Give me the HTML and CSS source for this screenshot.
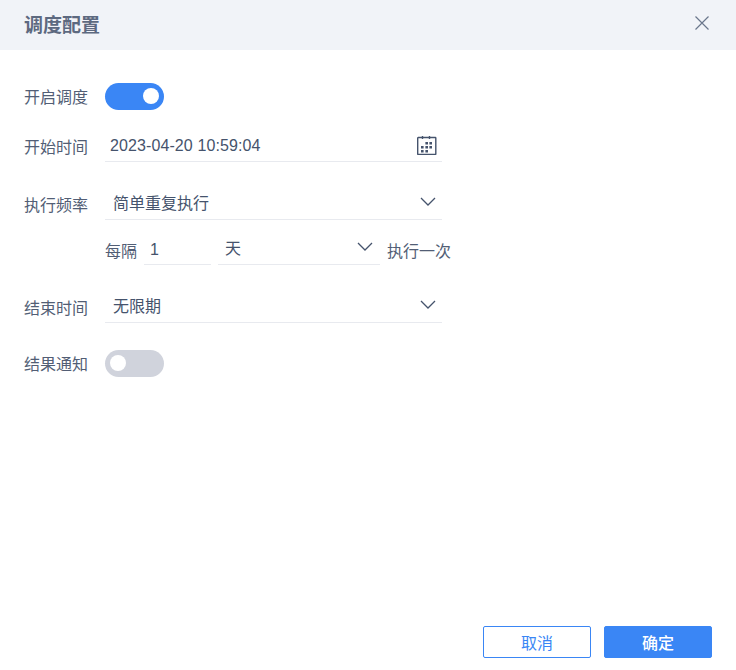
FILE: index.html
```html
<!DOCTYPE html>
<html lang="zh-CN">
<head>
<meta charset="utf-8">
<title>调度配置</title>
<link rel="stylesheet" href="styles.css">
</head>
<body>
<div class="dialog">
  <header class="head">
    <h1 class="title">调度配置</h1>
    <svg class="close" width="16" height="16" viewBox="0 0 16 16"><path d="M1.500 1.500l13 13M14.500 1.500l-13 13"/></svg>
  </header>
  <main class="form">
    <div class="row row-switch-a">
      <span class="label">开启调度</span>
      <span class="switch on"><span class="knob"></span></span>
    </div>
    <div class="row row-start">
      <span class="label">开始时间</span>
      <div class="field date">
        <span class="date-text">2023-04-20 10:59:04</span>
        <svg class="cal" width="20" height="20" viewBox="0 0 20 20">
          <path class="cal-line" d="M1.200 2.500h17.100a.5.5 0 0 1 .5.5v16a.5.5 0 0 1-.5.5H1.200a.5.5 0 0 1-.5-.5V3a.5.5 0 0 1 .5-.5zM5.500 1v3M12.500 1v3"/>
          <path class="cal-dot" d="M8.400 7H11v2.500H8.400zM12.400 7H15v2.500h-2.600zM4 11h2.600v2.500H4zM8.400 11H11v2.500H8.400zM12.400 11H15v2.500h-2.600zM4 15h2.600v2.500H4zM8.400 15H11v2.500H8.400z"/>
        </svg>
      </div>
    </div>
    <div class="row row-freq">
      <span class="label">执行频率</span>
      <div class="field select">
        <span class="value">简单重复执行</span>
        <svg class="chev" width="16" height="9" viewBox="0 0 16 9"><path d="M1 1l7 7 7-7"/></svg>
      </div>
    </div>
    <div class="interval">
      <span class="text">每隔</span>
      <div class="num">1</div>
      <div class="unit">
        <span class="value">天</span>
        <svg class="chev" width="16" height="9" viewBox="0 0 16 9"><path d="M1 1l7 7 7-7"/></svg>
      </div>
      <span class="text">执行一次</span>
    </div>
    <div class="row row-end">
      <span class="label">结束时间</span>
      <div class="field select">
        <span class="value">无限期</span>
        <svg class="chev" width="16" height="9" viewBox="0 0 16 9"><path d="M1 1l7 7 7-7"/></svg>
      </div>
    </div>
    <div class="row row-notify">
      <span class="label">结果通知</span>
      <span class="switch off"><span class="knob"></span></span>
    </div>
  </main>
  <footer class="foot">
    <button class="btn ghost" type="button">取消</button>
    <button class="btn primary" type="button">确定</button>
  </footer>
</div>
</body>
</html>
```
FILE: styles.css
```css
* { box-sizing: border-box; }
html, body { margin: 0; height: 100%; }
body {
  background: #fff;
  color: #45536c;
  font-family: "Liberation Sans", "Noto Sans CJK SC", sans-serif;
  font-size: 16px;
}
.dialog { width: 736px; height: 670px; display: flex; flex-direction: column; }
.head {
  height: 50px;
  flex: none;
  background: #f1f3f8;
  display: flex;
  align-items: center;
  justify-content: space-between;
  padding: 0 26px 0 24px;
}
.title { margin: -4px 0 0; font-size: 19px; font-weight: 700; color: #5d6980; }
.close { margin-top: -5px; }
.close path { stroke: #6b768c; stroke-width: 1.2; fill: none; }
.form { flex: 1; padding: 33px 0 0 24px; }
.row { display: flex; align-items: center; }
.label { width: 81px; flex: none; color: #525e75; line-height: 24px; padding-top: 3px; }
.switch {
  width: 59px;
  height: 27px;
  border-radius: 14px;
  display: flex;
  align-items: center;
  padding: 0 5px;
}
.switch.on { background: #3a86f5; justify-content: flex-end; }
.switch.off { background: #d0d3dc; }
.knob { width: 16px; height: 16px; border-radius: 50%; background: #fff; margin-top: -1px; }
.row-switch-a { height: 27px; }
.row-start { margin-top: 20px; height: 32px; }
.row-freq { margin-top: 26px; height: 32px; }
.row-end { margin-top: 26px; height: 32px; }
.row-notify { margin-top: 27px; height: 27px; }
.field {
  width: 337px;
  height: 32px;
  border-bottom: 1px solid #e8eaef;
  display: flex;
  align-items: center;
  justify-content: space-between;
  color: #45536c;
  font-size: 16px;
}
.date { padding: 0 0 0 5px; }
.date-text { letter-spacing: 0.1px; }
.cal { margin: -1px 5px 0 0; }
.cal-line { fill: none; stroke: #45536c; stroke-width: 1.4; }
.cal-dot { fill: #45536c; }
.select { padding: 0 6px 1px 8px; }
.value { margin-top: -2px; }
.chev { flex: none; margin-top: -3px; }
.chev path { fill: none; stroke: #45536c; stroke-width: 1.3; }
.interval {
  display: flex;
  align-items: center;
  margin: 13px 0 0 81px;
  height: 32px;
}
.text { color: #525e75; padding-top: 2px; }
.num {
  width: 67px;
  height: 32px;
  margin-left: 7px;
  padding-left: 6px;
  border-bottom: 1px solid #e8eaef;
  line-height: 33px;
  color: #45536c;
}
.unit {
  width: 162px;
  height: 32px;
  margin: 0 7px;
  padding: 0 7px 1px 7px;
  border-bottom: 1px solid #e8eaef;
  display: flex;
  align-items: center;
  justify-content: space-between;
  color: #45536c;
}
.foot {
  flex: none;
  display: flex;
  justify-content: flex-end;
  gap: 13px;
  padding: 0 24px 12px 0;
}
.btn {
  width: 108px;
  height: 32px;
  border-radius: 2px;
  font: inherit;
  font-size: 16px;
  border: 1px solid #3a86f5;
  padding: 0;
}
.ghost { background: #fff; color: #3a86f5; }
.primary { background: #3a86f5; color: #fff; font-weight: 500; }
```
